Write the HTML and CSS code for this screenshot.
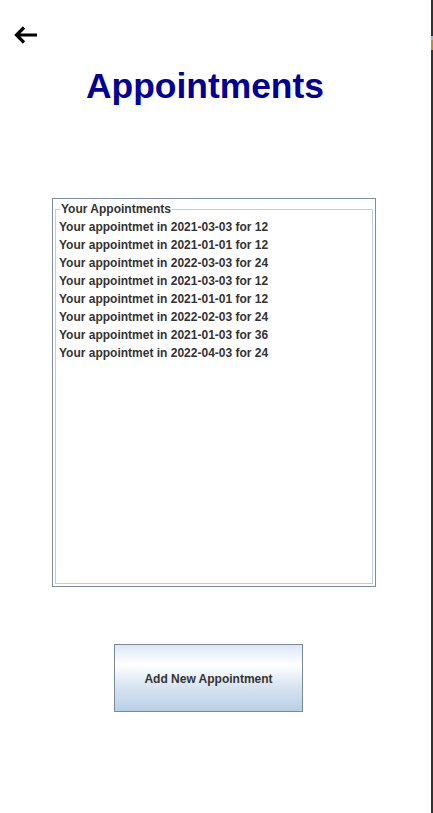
FILE: index.html
```html
<!DOCTYPE html>
<html>
<head>
<meta charset="utf-8">
<link rel="stylesheet" href="styles.css">
</head>
<body>
<div class="screen">
  <div class="topbar">
    <svg class="back" width="28" height="22" viewBox="0 0 28 22">
      <path d="M25 11 H5 M12 3.5 L4.5 11 L12 18.5" fill="none" stroke="#000" stroke-width="3.2" stroke-linecap="butt" stroke-linejoin="miter"/>
    </svg>
  </div>
  <h1 class="title">Appointments</h1>
  <div class="panel">
    <fieldset class="group">
      <legend class="group-title">Your Appointments</legend>
      <ul class="list">
        <li>Your appointmet in 2021-03-03 for 12</li>
        <li>Your appointmet in 2021-01-01 for 12</li>
        <li>Your appointmet in 2022-03-03 for 24</li>
        <li>Your appointmet in 2021-03-03 for 12</li>
        <li>Your appointmet in 2021-01-01 for 12</li>
        <li>Your appointmet in 2022-02-03 for 24</li>
        <li>Your appointmet in 2021-01-03 for 36</li>
        <li>Your appointmet in 2022-04-03 for 24</li>
      </ul>
    </fieldset>
  </div>
  <div class="actions">
    <button class="btn">Add New Appointment</button>
  </div>
</div>
<div class="edge"><span class="edge-mark"></span></div>
</body>
</html>
```
FILE: styles.css
```css
html, body {
  margin: 0;
  padding: 0;
  background: #fff;
}
body {
  display: flex;
  width: 433px;
  height: 813px;
  overflow: hidden;
  font-family: "Liberation Sans", Arial, sans-serif;
}
.screen {
  width: 431px;
  display: flex;
  flex-direction: column;
}
.topbar {
  height: 60px;
  padding: 24px 0 0 12px;
  box-sizing: border-box;
}
.back {
  display: block;
}
.title {
  margin: 0;
  text-align: center;
  font-size: 35.4px;
  font-weight: bold;
  line-height: 52px;
  color: #000099;
  padding-right: 21px;
}
.panel {
  margin: 86px 0 0 52px;
  width: 324px;
  height: 389px;
  box-sizing: border-box;
  border: 1px solid #7b8da1;
  padding: 2px 2px 2px 2px;
  display: flex;
  flex-direction: column;
}
.group {
  flex: 1;
  margin: 0;
  min-width: 0;
  border: 1px solid #b8cfe5;
  padding: 0 4px 0 3px;
}
.group-title {
  font-size: 12px;
  font-weight: bold;
  color: #333;
  line-height: 16px;
  padding: 0 1px;
  margin-left: 1px;
}
.list {
  list-style: none;
  margin: 0;
  padding: 1px 0 0 0;
}
.list li {
  font-size: 12px;
  font-weight: bold;
  color: #333;
  line-height: 18px;
  white-space: nowrap;
}
.actions {
  margin-top: 57px;
  padding-left: 114px;
}
.btn {
  width: 189px;
  height: 68px;
  border: 1px solid #7a8a9d;
  border-radius: 0;
  background: linear-gradient(to bottom, #dce7f3 0%, #ffffff 30%, #d9e5f1 62%, #b9cfe5 100%);
  font-family: "Liberation Sans", Arial, sans-serif;
  font-size: 12px;
  font-weight: bold;
  color: #333;
  padding: 2px 0 0 0;
}
.edge {
  width: 2px;
  background: #333;
  position: relative;
}
.edge-mark {
  position: absolute;
  left: 0;
  top: 36px;
  width: 2px;
  height: 14px;
  background: linear-gradient(to bottom, #9bb7d4 0 30%, #c88a1a 30% 100%);
}
```
